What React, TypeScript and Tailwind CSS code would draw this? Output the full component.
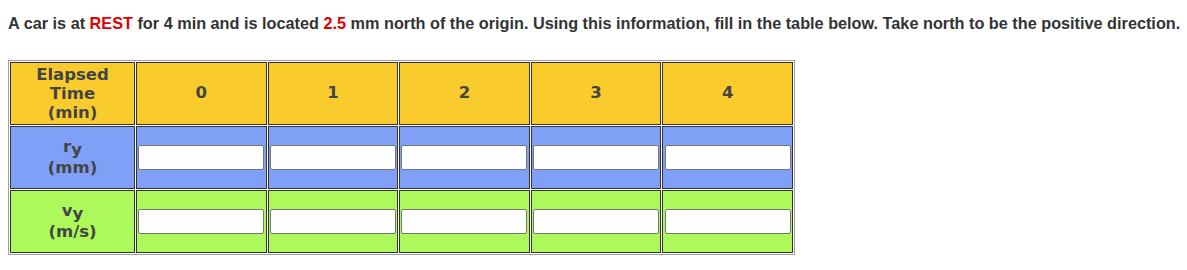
import React from 'react';

const times = [0, 1, 2, 3, 4];

const cellBase = 'border border-[#333] align-middle text-center p-0';

const ValueRow: React.FC<{ symbol: string; unit: string; bg: string }> = ({ symbol, unit, bg }) => (
  <tr className="h-[63px]">
    <td className={`${cellBase} ${bg} w-[125px]`}>
      <div className="leading-[19px]">
        {symbol}
        <sub className="text-[16.5px] relative top-[3px] align-baseline">y</sub>
      </div>
      <div className="leading-[23px]">({unit})</div>
    </td>
    {times.map((t) => (
      <td key={t} className={`${cellBase} ${bg} w-[130.6px] px-[1px]`}>
        <input
          type="text"
          className="block w-[126px] h-[25px] mx-auto bg-white border border-[#767676] rounded-[2px] outline-none"
        />
      </td>
    ))}
  </tr>
);

export default function App() {
  return (
    <div className="bg-white min-h-[270px] px-2 pt-[14px]">
      <p
        className="text-[16.25px] leading-[18px] font-bold text-[#333] whitespace-nowrap"
        style={{ fontFamily: '"Liberation Sans", Arial, sans-serif' }}
      >
        A car is at <span className="text-[#e00000]">REST</span> for 4 min and is located{' '}
        <span className="text-[#e00000]">2.5</span> mm north of the origin. Using this information, fill in the
        table below. Take north to be the positive direction.
      </p>

      <table
        className="mt-[28px] border border-[#a0a0a0] border-separate border-spacing-[1px] text-[16.5px] font-bold text-[#444]"
        style={{ fontFamily: '"DejaVu Sans", Verdana, sans-serif' }}
      >
        <tbody>
          <tr className="h-[63px]">
            <td className={`${cellBase} bg-[#facb2d] w-[125px] leading-[19px]`}>
              Elapsed
              <br />
              Time
              <br />
              (min)
            </td>
            {times.map((t) => (
              <td key={t} className={`${cellBase} bg-[#facb2d] w-[130.6px]`}>
                {t}
              </td>
            ))}
          </tr>
          <ValueRow symbol="r" unit="mm" bg="bg-[#809ff6]" />
          <ValueRow symbol="v" unit="m/s" bg="bg-[#adf95b]" />
        </tbody>
      </table>
    </div>
  );
}
